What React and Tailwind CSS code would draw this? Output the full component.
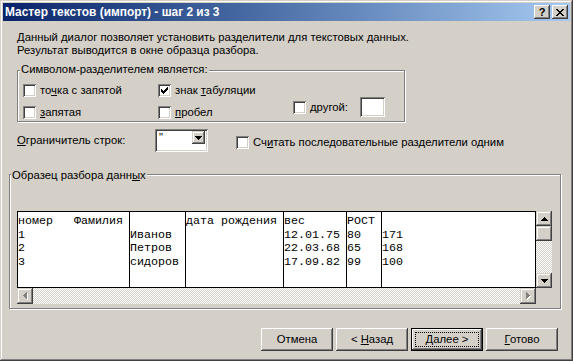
const sunken =
  "shadow-[inset_1px_1px_0_#808080,inset_-1px_-1px_0_#ffffff,inset_2px_2px_0_#404040,inset_-2px_-2px_0_#d4d0c8]";
const raised =
  "shadow-[inset_-1px_-1px_0_#404040,inset_1px_1px_0_#ffffff,inset_-2px_-2px_0_#808080,inset_2px_2px_0_#d4d0c8]";
const raisedBar =
  "shadow-[inset_-1px_-1px_0_#404040,inset_1px_1px_0_#d4d0c8,inset_-2px_-2px_0_#808080,inset_2px_2px_0_#ffffff]";

function Check({ checked }) {
  return (
    <span className={"relative block w-[13px] h-[13px] shrink-0 bg-white " + sunken}>
      {checked && (
        <svg
          className="absolute left-[3px] top-[3px]"
          width="7"
          height="7"
          viewBox="0 0 7 7"
          shapeRendering="crispEdges"
        >
          <path
            d="M6 0h1v1h-1z M5 1h2v1h-2z M0 2h1v1h-1z M4 2h3v1h-3z M0 3h2v1h-2z M3 3h3v1h-3z M0 4h5v1h-5z M1 5h3v1h-3z M2 6h1v1h-1z"
            fill="#000"
          />
        </svg>
      )}
    </span>
  );
}

function ArrowUp() {
  return (
    <svg width="7" height="4" viewBox="0 0 7 4" shapeRendering="crispEdges">
      <path d="M3 0h1v1h-1z M2 1h3v1h-3z M1 2h5v1h-5z M0 3h7v1h-7z" fill="#000" />
    </svg>
  );
}
function ArrowDown() {
  return (
    <svg width="7" height="4" viewBox="0 0 7 4" shapeRendering="crispEdges">
      <path d="M0 0h7v1h-7z M1 1h5v1h-5z M2 2h3v1h-3z M3 3h1v1h-1z" fill="#000" />
    </svg>
  );
}
function ArrowLeftDisabled() {
  return (
    <svg width="5" height="8" viewBox="0 0 5 8" shapeRendering="crispEdges">
      <path d="M4 1h1v7h-1z M3 2h1v5h-1z M2 3h1v3h-1z M1 4h1v1h-1z" fill="#fff" />
      <path d="M3 0h1v7h-1z M2 1h1v5h-1z M1 2h1v3h-1z M0 3h1v1h-1z" fill="#808080" />
    </svg>
  );
}
function ArrowRightDisabled() {
  return (
    <svg width="5" height="8" viewBox="0 0 5 8" shapeRendering="crispEdges">
      <path d="M1 1h1v7h-1z M2 2h1v5h-1z M3 3h1v3h-1z M4 4h1v1h-1z" fill="#fff" />
      <path d="M0 0h1v7h-1z M1 1h1v5h-1z M2 2h1v3h-1z M3 3h1v1h-1z" fill="#808080" />
    </svg>
  );
}

function Btn({ children, def }) {
  if (def) {
    return (
      <div className="w-[72px] h-[23px] border border-black">
        <div className={"w-full h-full p-[3px] " + raised}>
          <div className="w-full h-full border border-dotted border-black flex items-center justify-center leading-[13px] whitespace-pre">
            {children}
          </div>
        </div>
      </div>
    );
  }
  return (
    <div className={"w-[72px] h-[23px] flex items-center justify-center leading-[13px] whitespace-pre " + raised}>
      {children}
    </div>
  );
}

const checker =
  "bg-[image:repeating-conic-gradient(#ffffff_0%_25%,#d4d0c8_0%_50%)] bg-[length:2px_2px]";

function Col({ w, lines, last }) {
  return (
    <div
      className={
        (last ? "flex-1 " : "shrink-0 border-r border-black ") +
        "pt-[3px] whitespace-pre leading-[13.7px]"
      }
      style={w ? { width: w } : undefined}
    >
      {lines.map((l, i) => (
        <div key={i} className="h-[13.7px]">
          {l}
        </div>
      ))}
    </div>
  );
}

const U = ({ children }) => <u className="underline-offset-[1px]">{children}</u>;

export default function App() {
  return (
    <div
      className={
        "w-[573px] h-[361px] bg-[#d4d0c8] p-[3px] flex flex-col overflow-hidden text-black text-[11.3px] font-['Liberation_Sans',Arial,sans-serif] shadow-[inset_-1px_-1px_0_#404040,inset_1px_1px_0_#d4d0c8,inset_-2px_-2px_0_#808080,inset_2px_2px_0_#ffffff]"
      }
    >
      {/* Title bar */}
      <div className="h-[18px] shrink-0 flex items-center bg-linear-to-r from-[#0a246a] to-[#a6caf0] pl-[2px] pr-[2px]">
        <span className="flex-1 text-white font-bold text-[11.9px] leading-[18px] whitespace-nowrap">
          Мастер текстов (импорт) - шаг 2 из 3
        </span>
        <div className={"w-[16px] h-[14px] bg-[#d4d0c8] flex items-center justify-center font-bold text-[11px] leading-[14px] " + raised}>
          ?
        </div>
        <div className={"ml-[2px] w-[16px] h-[14px] bg-[#d4d0c8] flex items-center justify-center " + raised}>
          <svg width="8" height="7" viewBox="0 0 8 7" shapeRendering="crispEdges">
            <path
              d="M0 0h2v1h-2z M6 0h2v1h-2z M1 1h2v1h-2z M5 1h2v1h-2z M2 2h4v1h-4z M3 3h2v1h-2z M2 4h4v1h-4z M1 5h2v1h-2z M5 5h2v1h-2z M0 6h2v1h-2z M6 6h2v1h-2z"
              fill="#000"
            />
          </svg>
        </div>
      </div>

      {/* Intro text */}
      <div className="mt-[10px] ml-[14px] leading-[13px]">
        <div>Данный диалог позволяет установить разделители для текстовых данных.</div>
        <div>Результат выводится в окне образца разбора.</div>
      </div>

      {/* Group 1 */}
      <div className="relative mt-[13px] ml-[14px] w-[388px] h-[52px] shrink-0 border border-[#808080] shadow-[1px_1px_0_#ffffff,inset_1px_1px_0_#ffffff] pt-[13px] pl-[5px]">
        <span className="absolute left-[2px] -top-[8px] bg-[#d4d0c8] px-[1px] leading-[13px]">
          Символом-разделителем является:
        </span>
        <div className="flex h-[13px] items-center">
          <div className="w-[135px] flex items-center gap-[4px]">
            <Check />
            <span>
              то<U>ч</U>ка с запятой
            </span>
          </div>
          <div className="flex items-center gap-[4px]">
            <Check checked />
            <span>
              знак <U>т</U>абуляции
            </span>
          </div>
        </div>
        <div className="flex h-[13px] mt-[7px] items-start">
          <div className="w-[135px] flex items-center gap-[4px]">
            <Check />
            <span>
              <U>з</U>апятая
            </span>
          </div>
          <div className="w-[135px] flex items-center gap-[4px]">
            <Check />
            <span>
              <U>п</U>робел
            </span>
          </div>
          <div className="-mt-[7px] h-[20px] flex items-center">
            <Check />
            <span className="ml-[4px] w-[50px]">
              <U>д</U>ругой:
            </span>
            <div className={"w-[25px] h-[20px] bg-white " + sunken}></div>
          </div>
        </div>
      </div>

      {/* Delimiter row */}
      <div className="mt-[7px] ml-[14px] h-[23px] shrink-0 flex items-center">
        <span className="w-[138px]">
          <U>О</U>граничитель строк:
        </span>
        <div className={"w-[53px] h-[23px] bg-white flex justify-between items-start pt-[2px] pl-[4px] pr-[3px] " + sunken}>
          <span className="leading-[13px]">"</span>
          <div className={"w-[13px] h-[13px] bg-[#d4d0c8] flex items-center justify-center " + raisedBar}>
            <ArrowDown />
          </div>
        </div>
        <div className="ml-[28px] mt-[3px] flex items-center gap-[4px]">
          <Check />
          <span>
            Сч<U>и</U>тать последовательные разделители одним
          </span>
        </div>
      </div>

      {/* Group 2 */}
      <div className="relative mt-[22px] ml-[6px] w-[552px] h-[135px] shrink-0 border border-[#808080] shadow-[1px_1px_0_#ffffff,inset_1px_1px_0_#ffffff] pt-[36px] pl-[7px]">
        <span className="absolute left-[1px] -top-[6px] bg-[#d4d0c8] px-[1px] leading-[13px]">
          Образец разбора данн<U>ы</U>х
        </span>
        <div className="flex flex-col w-[535px]">
          <div className="flex h-[77px]">
            <div className="w-[519px] h-[77px] border border-black bg-white flex font-['Liberation_Mono','Courier_New',monospace] text-[11.67px] overflow-hidden">
              <Col w="112px" lines={["номер   Фамилия", "1", "2", "3"]} />
              <Col w="56px" lines={["", "Иванов", "Петров", "сидоров"]} />
              <Col w="98px" lines={["дата рождения", "", "", ""]} />
              <Col w="63px" lines={["вес", "12.01.75", "22.03.68", "17.09.82"]} />
              <Col w="35px" lines={["РОСТ", "80", "65", "99"]} />
              <Col last lines={["", "171", "168", "100"]} />
            </div>
            <div className="w-[16px] h-[77px] flex flex-col">
              <div className={"h-[15px] bg-[#d4d0c8] flex items-center justify-center " + raisedBar}>
                <ArrowUp />
              </div>
              <div className={"h-[15px] bg-[#d4d0c8] " + raisedBar}></div>
              <div className={"flex-1 " + checker}></div>
              <div className={"h-[15px] bg-[#d4d0c8] flex items-center justify-center " + raisedBar}>
                <ArrowDown />
              </div>
            </div>
          </div>
          <div className="flex h-[16px]">
            <div className={"w-[519px] flex " + checker}>
              <div className={"w-[16px] h-[16px] bg-[#d4d0c8] flex items-center justify-center " + raisedBar}>
                <ArrowLeftDisabled />
              </div>
              <div className="flex-1"></div>
              <div className={"w-[16px] h-[16px] bg-[#d4d0c8] flex items-center justify-center " + raisedBar}>
                <ArrowRightDisabled />
              </div>
            </div>
            <div className="w-[16px] bg-[#d4d0c8]"></div>
          </div>
        </div>
      </div>

      {/* Buttons */}
      <div className="mt-[19px] ml-[258px] flex gap-[3px]">
        <Btn>Отмена</Btn>
        <Btn>
          <span>
            {"< "}
            <U>Н</U>азад
          </span>
        </Btn>
        <Btn def>
          <span>
            <U>Д</U>
            {"алее >"}
          </span>
        </Btn>
        <Btn>
          <span>
            <U>Г</U>отово
          </span>
        </Btn>
      </div>
    </div>
  );
}
